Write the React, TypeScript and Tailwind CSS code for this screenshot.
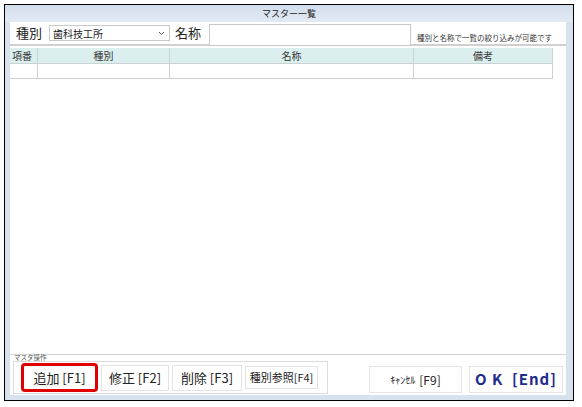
import React from "react";

const columns = [
  { label: "項番", width: "w-[28px]" },
  { label: "種別", width: "w-[132px]" },
  { label: "名称", width: "w-[244px]" },
  { label: "備考", width: "w-[139px]" },
];

const opButtons = [
  { label: "修正 [F2]", width: "w-[68px]" },
  { label: "削除 [F3]", width: "w-[70px]" },
];

export default function App() {
  return (
    <div
      className="w-[582px] h-[407px] bg-white pt-[4px] pl-[4px]"
      style={{ fontFamily: '"Noto Sans CJK JP", "Noto Sans", sans-serif' }}
    >
      <div className="w-[570px] h-[397px] border border-black bg-[#d8e2ee] flex flex-col">
        {/* title bar */}
        <div className="h-[17px] flex items-center justify-center text-[9px] text-[#222] bg-gradient-to-b from-[#d3deec] to-[#e2e9f3]">
          マスター一覧
        </div>

        <div className="flex-1 ml-[5px] mr-[7px] mb-[5px] bg-white flex flex-col">
          {/* filter row */}
          <div className="h-[24px] flex items-start border-b-2 border-[#d0d0d0]">
            <span className="ml-[6px] mt-[2px] text-[13px] leading-[18px] text-[#222]">種別</span>
            <div className="ml-[7px] mt-[3px] w-[121px] h-[16px] border border-[#c8c8c8] flex items-center justify-between px-[3px] text-[10px] text-[#222]">
              <span>歯科技工所</span>
              <svg width="7" height="5" viewBox="0 0 7 5" className="mr-[1px]">
                <path d="M1 1 L3.5 3.5 L6 1" fill="none" stroke="#555" strokeWidth="1" />
              </svg>
            </div>
            <span className="ml-[5px] mt-[2px] text-[13px] leading-[18px] text-[#222]">名称</span>
            <div className="ml-[8px] mt-[2px] w-[202px] h-[22px] border border-[#c8c8c8] bg-white z-10" />
            <span className="ml-[6px] mt-[11px] text-[7.5px] leading-[10px] text-[#333] whitespace-nowrap">
              種別と名称で一覧の絞り込みが可能です
            </span>
          </div>

          {/* grid */}
          <div className="flex-1 pt-[2px] border-b border-[#d4d4d4]">
            <div className="w-[543px]">
              <div className="flex h-[16px] bg-[#dcefef] border-b border-[#c9d3d3]">
                {columns.map((c, i) => (
                  <div
                    key={c.label}
                    className={`${c.width} flex items-center ${i === 0 ? "justify-start pl-[2px]" : "justify-center"} text-[10px] text-[#333] border-r border-[#c9d3d3]`}
                  >
                    {c.label}
                  </div>
                ))}
              </div>
              <div className="flex h-[15px] border-b border-[#d0d0d0]">
                {columns.map((c) => (
                  <div key={c.label} className={`${c.width} border-r border-[#d0d0d0]`} />
                ))}
              </div>
            </div>
          </div>

          {/* bottom operations */}
          <div className="h-[40px] flex items-end pb-[1px]">
            <div className="ml-[3px] flex flex-col">
              <span className="text-[6.5px] leading-[7px] text-[#555] ml-[1px]">マスタ操作</span>
              <div className="w-[315px] h-[33px] border border-[#dcdcdc] flex items-center pl-[7px] gap-[3px]">
                <div className="w-[77px] h-[29px] border-[3px] border-[#e00000] rounded-[4px] flex items-center justify-center text-[13px] text-[#222]">
                  追加 [F1]
                </div>
                {opButtons.map((b) => (
                  <div
                    key={b.label}
                    className={`${b.width} h-[26px] border border-[#e4e4e4] flex items-center justify-center text-[13px] text-[#222]`}
                  >
                    {b.label}
                  </div>
                ))}
                <div className="w-[73px] h-[23px] border border-[#e4e4e4] flex items-center justify-center text-[11px] text-[#222]">
                  種別参照[F4]
                </div>
              </div>
            </div>
            <div className="ml-[41px] mb-[1px] w-[93px] h-[27px] border border-[#e4e4e4] flex items-center justify-center text-[12px] text-[#222]">
              <span className="text-[10px] mr-[4px]">ｷｬﾝｾﾙ</span>[F9]
            </div>
            <div className="ml-[7px] mb-[1px] w-[94px] h-[27px] border border-[#e4e4e4] flex items-center justify-center text-[15px] font-bold text-[#1e2a8c] tracking-[1px]">
              O K&nbsp;&nbsp;[End]
            </div>
          </div>
        </div>
      </div>
    </div>
  );
}
